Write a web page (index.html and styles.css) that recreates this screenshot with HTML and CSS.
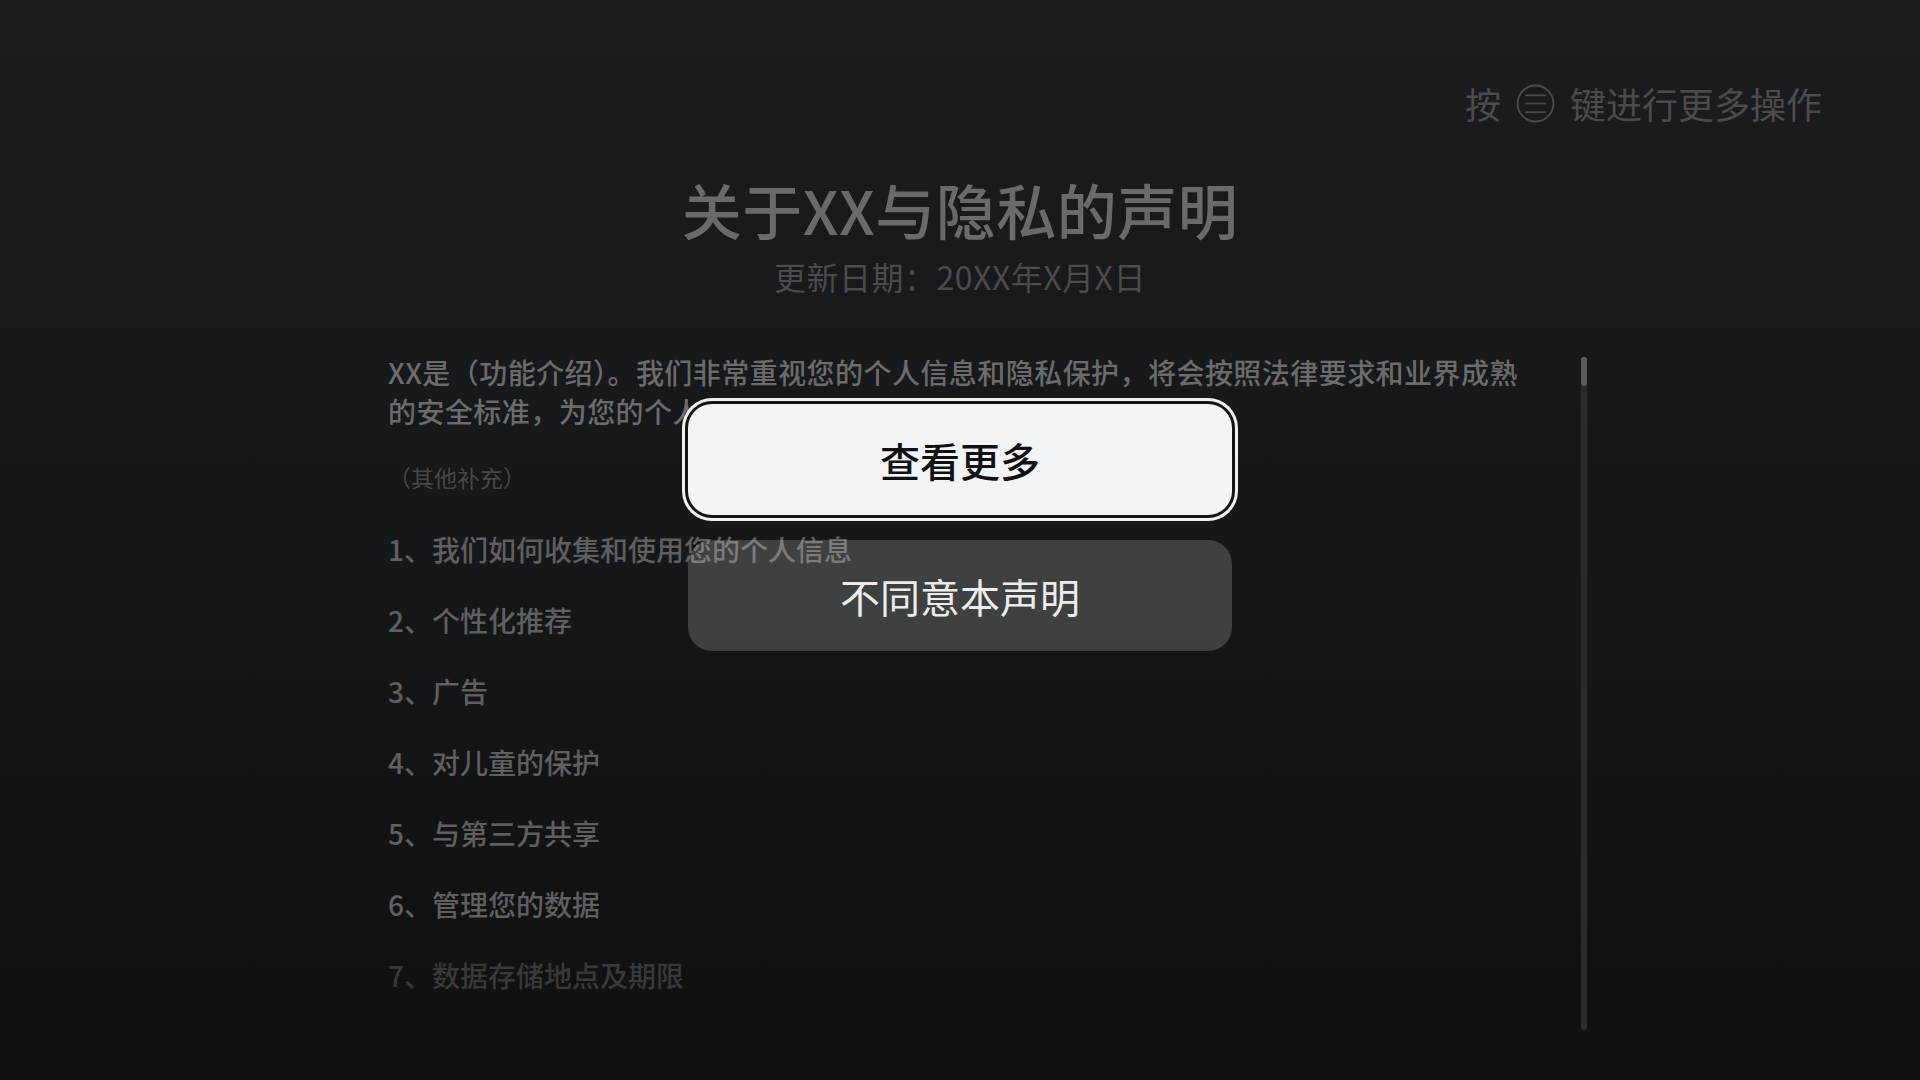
FILE: index.html
```html
<!DOCTYPE html>
<html lang="zh-CN">
<head>
<meta charset="utf-8">
<title>关于XX与隐私的声明</title>
<link rel="stylesheet" href="styles.css">
</head>
<body>
<div class="screen">
  <header class="hint">
    <span>按</span>
    <svg class="menu-icon" width="39" height="39" viewBox="0 0 38 38" aria-hidden="true">
      <circle cx="19" cy="19" r="17.5" fill="none" stroke="#4b4b4d" stroke-width="1.8"/>
      <line x1="9" y1="11" x2="29" y2="11" stroke="#4b4b4d" stroke-width="1.8"/>
      <line x1="9" y1="19" x2="29" y2="19" stroke="#4b4b4d" stroke-width="1.8"/>
      <line x1="9" y1="27.5" x2="29" y2="27.5" stroke="#4b4b4d" stroke-width="1.8"/>
    </svg>
    <span>键进行更多操作</span>
  </header>

  <section class="heading">
    <h1 class="title">关于XX与隐私的声明</h1>
    <p class="date">更新日期：20XX年X月X日</p>
  </section>

  <section class="body-area">
    <div class="content">
      <p class="intro">XX是（功能介绍）。我们非常重视您的个人信息和隐私保护，将会按照法律要求和业界成熟的安全标准，为您的个人信息提供更完善的保护措施。</p>
      <p class="extra">（其他补充）</p>
      <ul class="items">
        <li>1、我们如何收集和使用您的个人信息</li>
        <li>2、个性化推荐</li>
        <li>3、广告</li>
        <li>4、对儿童的保护</li>
        <li>5、与第三方共享</li>
        <li>6、管理您的数据</li>
        <li class="faded">7、数据存储地点及期限</li>
      </ul>
    </div>
    <div class="scrollbar"><div class="thumb"></div></div>
  </section>

  <div class="dialog">
    <button class="btn btn-primary">查看更多</button>
    <button class="btn btn-secondary">不同意本声明</button>
  </div>
</div>
</body>
</html>
```
FILE: styles.css
```css
* { box-sizing: border-box; }
html, body {
  margin: 0;
  padding: 0;
  width: 1920px;
  height: 1080px;
  overflow: hidden;
}
body {
  font-family: "Noto Sans CJK SC", "Noto Sans", sans-serif;
  background: linear-gradient(180deg, #1b1c1e 0%, #161718 50%, #101011 100%);
  color: #6a6a6a;
}
.screen {
  position: relative;
  width: 1920px;
  height: 1080px;
}
.hint {
  display: flex;
  justify-content: flex-end;
  align-items: center;
  gap: 15px;
  padding: 79px 98px 0 0;
  height: 127px;
  font-size: 36px;
  line-height: 48px;
  color: #4b4b4d;
}
.menu-icon { display: block; }

.heading {
  text-align: center;
  margin-top: 46px;
}
.title {
  margin: 0;
  font-size: 60px;
  line-height: 72px;
  font-weight: 500;
  letter-spacing: 0.5px;
  color: #6a6a6a;
}
.date {
  margin: 9px 0 0;
  font-size: 32px;
  line-height: 44px;
  letter-spacing: 0.5px;
  color: #4b4b4c;
}

.body-area {
  display: flex;
  padding-left: 388px;
  margin-top: 55px;
}
.content {
  width: 1140px;
}
.intro {
  margin: 0;
  font-size: 28px;
  line-height: 39px;
  font-weight: 500;
  letter-spacing: 0.45px;
  color: #6b6b6b;
}
.extra {
  margin: 29px 0 0;
  font-size: 23px;
  line-height: 34px;
  color: #474748;
}
.items {
  list-style: none;
  margin: 35px 0 0;
  padding: 0;
  display: flex;
  flex-direction: column;
  gap: 31px;
}
.items li {
  font-size: 28px;
  line-height: 40px;
  font-weight: 500;
  color: #5f5f60;
}
.items li.faded { color: #38393a; }

.scrollbar {
  margin: 4px 0 0 53px;
  width: 6px;
  height: 673px;
  border-radius: 3px;
  background: #2a2b2c;
}
.thumb {
  width: 6px;
  height: 29px;
  border-radius: 3px;
  background: #5c5c5d;
}

.dialog {
  position: absolute;
  left: 0;
  top: 0;
  width: 1920px;
  padding-top: 404px;
  display: flex;
  flex-direction: column;
  align-items: center;
  gap: 25px;
}
.btn {
  width: 544px;
  height: 111px;
  border: none;
  border-radius: 24px;
  font-family: "Noto Sans CJK SC", "Noto Sans", sans-serif;
  font-size: 40px;
  padding: 0;
}
.btn-primary {
  background: #f2f3f5;
  color: #111;
  font-weight: 500;
  box-shadow: 0 0 0 3px #141415, 0 0 0 6px #f0f0f0;
}
.btn-secondary {
  background: rgba(255, 255, 255, 0.18);
  color: #ececec;
  font-weight: 400;
}
```
